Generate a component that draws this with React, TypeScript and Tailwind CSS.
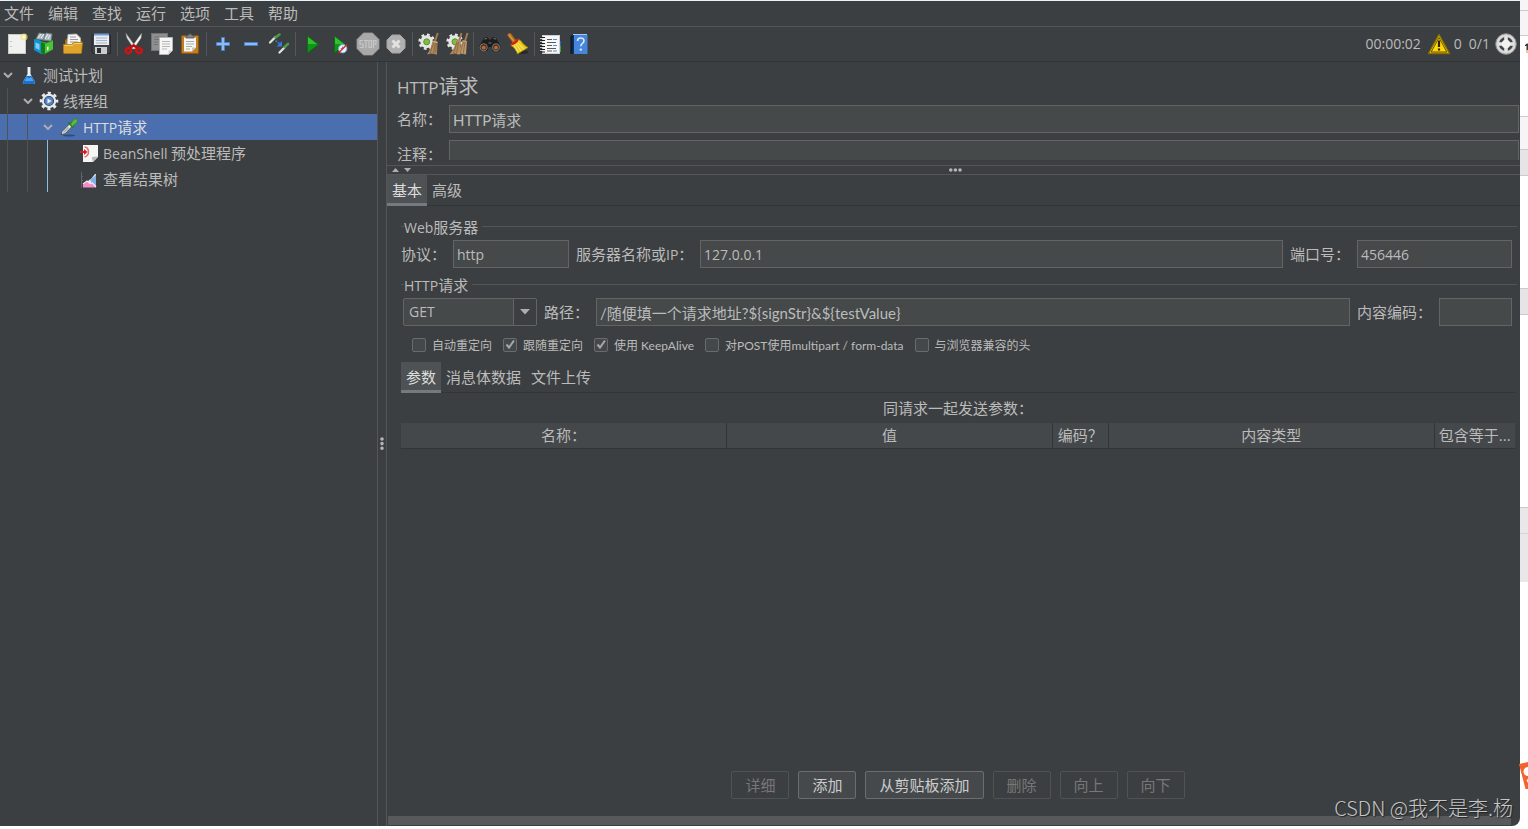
import { useState } from "react";
import type { ReactNode } from "react";
import clsx from "clsx";

const menus = ["文件", "编辑", "查找", "运行", "选项", "工具", "帮助"];

const inputClass = "h-7 min-w-0 border border-[#646464] bg-[#45494a] px-[3px] text-[#bbbbbb] outline-none";
const latinInput = clsx(inputClass, "text-sm");
// Lato keeps Latin runs in step with the 15px Chinese text
const mixedInput = clsx(inputClass, "font-['Lato','Noto_Sans_CJK_SC',sans-serif] text-[15px]");

/* ---------- icons ---------- */

function Icon({ children, size = 24 }: { children: ReactNode; size?: number }) {
  return (
    <svg width={size} height={size} viewBox={`0 0 ${size} ${size}`} fill="none" aria-hidden="true" className="shrink-0">
      {children}
    </svg>
  );
}

const NewIcon = () => (
  <Icon>
    <rect x="3.500" y="2.500" width="17" height="19" fill="#f1f1ef" stroke="#c9c9c6" />
    <path d="M5.500 9.500h1M5.500 14.500h1" stroke="#999" />
    <circle cx="19" cy="5" r="3.600" fill="#f3e27a" opacity=".7" />
    <circle cx="19" cy="5" r="1.800" fill="#fffbd0" />
  </Icon>
);

const TemplatesIcon = () => (
  <Icon>
    <path d="M3 7l3-6 6 1-1 6zM10 8l3-7 6 1-1 7z" fill="#a9b9c0" stroke="#6f7f86" strokeWidth=".8" />
    <path d="M5 6l3-4M8 6l3-4M12 7l3-5M15 7l2-4" stroke="#eef4f6" />
    <path d="M1 7l5 1 4 2v11.500l-2 .5-7-4z" fill="#1292d0" />
    <path d="M2.500 10.500l4 1.500v6l-4-2z" fill="#7fd0f0" />
    <path d="M8 9.500l6 1 6-2.500v9.500L11 22.500 8 21z" fill="#2da327" />
    <path d="M12 12l8-3v8l-8 4.500z" fill="#4cc535" />
    <path d="M8 10l4 2v10.500L8 21z" fill="#167a18" />
    <path d="M14 15l1.500-.5v3.500l-1.500.5z" fill="#eaffdf" />
  </Icon>
);

const OpenIcon = () => (
  <Icon>
    <path d="M4 8l3-2h12l2 4v11H4z" fill="#a8700f" />
    <path d="M7 2.500L15.500 2l4 4V14H6z" fill="#f4f4f4" stroke="#b7b7b7" strokeWidth=".8" />
    <path d="M9 5h6M9 7.500h8M9 10h8" stroke="#9a9a9a" />
    <path d="M2.500 12.500h8l2-2h9l-1 10c0 .6-.4 1-1 1H3.500c-.6 0-1-.4-1-1z" fill="#dfa42c" stroke="#b37a12" strokeWidth=".8" />
    <path d="M3.500 13.500h8l2-2h7" stroke="#f5cd6b" />
  </Icon>
);

const SaveIcon = () => (
  <Icon>
    <path d="M4 2.500h16.500l1 1v18H4.500l-1.500-2v-16z" fill="#3f4347" stroke="#24272a" />
    <rect x="5" y="2" width="15" height="11" fill="#e9edf3" />
    <path d="M5 2.500h15" stroke="#6f9bd4" strokeWidth="2" />
    <path d="M7 6h11M7 8.500h11M7 11h11" stroke="#a7b6c8" />
    <rect x="6" y="15" width="12" height="7" fill="#c9cbcd" />
    <rect x="8" y="16" width="4" height="5" fill="#2d3033" />
  </Icon>
);

const CutIcon = () => (
  <Icon>
    <path d="M4 1.500L14.500 16l-2.500 1L5 6z" fill="#e8e8e8" stroke="#a0a0a0" strokeWidth=".5" />
    <path d="M19.500 1.500L9 16l2.500 1L19 6z" fill="#fafafa" stroke="#a0a0a0" strokeWidth=".5" />
    <ellipse cx="6.500" cy="18.500" rx="2.800" ry="2.400" stroke="#d81010" strokeWidth="2.400" transform="rotate(-35 6.500 18.500)" />
    <ellipse cx="17" cy="18.500" rx="2.800" ry="2.400" stroke="#d81010" strokeWidth="2.400" transform="rotate(35 17 18.500)" />
    <path d="M8 16l3.700-2.800L15.500 16" stroke="#c00c0c" strokeWidth="2.400" />
  </Icon>
);

const CopyIcon = () => (
  <Icon>
    <rect x="1.500" y="1.500" width="16" height="17" fill="#8d8f90" stroke="#707273" />
    <path d="M4 5h11M4 7.500h5M4 10h4M4 12.500h4" stroke="#727475" />
    <path d="M9.500 5.500h13v13l-4 4h-9z" fill="#f6f6f6" stroke="#b4b4b4" />
    <path d="M12 9.500h8M12 12h8M12 14.500h8M12 17h5" stroke="#b6b6b6" />
    <path d="M18.500 22.500v-4h4z" fill="#cfcfcf" />
  </Icon>
);

const PasteIcon = () => (
  <Icon>
    <rect x="3.500" y="3.500" width="17" height="18" rx="1" fill="#c27d1f" stroke="#8d5610" />
    <path d="M6 5.500h12v10l-4 4H6z" fill="#f5f5f3" />
    <path d="M8 9.500h8M8 12h8M8 14.500h6M8 17h4" stroke="#a9a9a9" />
    <path d="M14 19.500v-4h4z" fill="#c4c4c4" />
    <path d="M8 6V3.500h2l1-1.500h2l1 1.500h2V6z" fill="#80837e" stroke="#4f514e" strokeWidth=".8" />
  </Icon>
);

const PlusIcon = () => (
  <Icon>
    <path d="M10.500 5.500h3v5h5v3h-5v5h-3v-5h-5v-3h5z" fill="#8fbcf0" stroke="#4a80c8" />
  </Icon>
);

const MinusIcon = () => (
  <Icon>
    <rect x="5.500" y="10.500" width="13" height="3" fill="#8fbcf0" stroke="#4a80c8" />
  </Icon>
);

const ToggleIcon = () => (
  <Icon>
    <path d="M3 10.500L8.500 5" stroke="#dfe8df" strokeWidth="2.200" strokeLinecap="round" />
    <path d="M8.500 5.500l4-3" stroke="#4c9a48" strokeWidth="2.600" strokeLinecap="round" />
    <path d="M12.500 20.500L18 15" stroke="#dfe8df" strokeWidth="2.200" strokeLinecap="round" />
    <path d="M17.500 15l3.500-3" stroke="#4c9a48" strokeWidth="2.600" strokeLinecap="round" />
    <path d="M8.500 8.500l5 4" stroke="#3c79d8" strokeWidth="1.500" strokeDasharray="2 1" />
    <path d="M15 9v5.500H9.500z" fill="#3c79d8" />
  </Icon>
);

const StartIcon = () => (
  <Icon>
    <path d="M7.500 4l11 8.500-11 8.500z" fill="#0c9714" stroke="#0a6b10" strokeWidth=".8" />
    <path d="M8 5l9 7H8z" fill="#35bd38" />
  </Icon>
);

const StartNoPauseIcon = () => (
  <Icon>
    <path d="M6.500 4l11 8.500-11 8.500z" fill="#0c9714" stroke="#0a6b10" strokeWidth=".8" />
    <path d="M7 5l9 7H7z" fill="#35bd38" />
    <circle cx="14.700" cy="16.700" r="4.200" fill="#e8f1fa" stroke="#7ba7d4" />
    <path d="M14.700 14.500v2.200h-2" stroke="#4777b0" />
    <path d="M10.500 21l8.500-8.500" stroke="#e02020" strokeWidth="1.300" />
  </Icon>
);

const StopIcon = () => (
  <Icon>
    <path d="M7.500 1h9L23 7.500v9L16.500 23h-9L1 16.500v-9z" fill="#a9a9a9" stroke="#9c9c9c" strokeWidth=".8" />
    <path d="M7 8.500H4v3.500h3v3.500H3.500M8 8.500h4M10 8.500v7.500M13 8.500h2.500v7H13zM17.500 16V8.500H20V12h-2.500" stroke="#c6c6c6" strokeWidth="1.200" />
  </Icon>
);

const ShutdownIcon = () => (
  <Icon>
    <path d="M8 3h8l5 5v8l-5 5H8l-5-5V8z" fill="#b0b0b0" stroke="#a4a4a4" />
    <path d="M8.500 8.500l7 7M15.500 8.500l-7 7" stroke="#e2e2e2" strokeWidth="3" />
  </Icon>
);

const ClearIcon = () => (
  <Icon>
    <circle cx="9.700" cy="9.700" r="7" stroke="#e6e6e4" strokeWidth="2.600" strokeDasharray="2.750 2.750" />
    <circle cx="9.700" cy="9.700" r="6.400" fill="#e6e6e4" />
    <circle cx="9.700" cy="9.800" r="3" fill="#7cc043" stroke="#5b8f34" />
    <path d="M20.800 1L18 9" stroke="#a07a4e" strokeWidth="2" />
    <path d="M15.500 8.500l5 1-.5 13-6-1-4 1c3-4.500 4.500-8.500 5.500-14z" fill="#b08a5e" />
    <path d="M17 10l-4 11M18.500 10l-2 11.500M19.500 11l-.8 10" stroke="#7c5b38" strokeWidth=".7" />
    <path d="M15.500 9.500l5 1" stroke="#d9b98d" />
  </Icon>
);

const ClearAllIcon = () => (
  <Icon>
    <circle cx="9.700" cy="9.700" r="7" stroke="#e6e6e4" strokeWidth="2.600" strokeDasharray="2.750 2.750" />
    <circle cx="9.700" cy="9.700" r="6.400" fill="#e6e6e4" />
    <circle cx="10" cy="9.800" r="3" fill="#7cc043" stroke="#5b8f34" />
    <path d="M16.500 1L14 9M22.500 1L20 9" stroke="#a07a4e" strokeWidth="2" />
    <path d="M11.500 8l4.500 1-1 13.500-5.500-1-5 1c4-5 6-9 7-14.500z" fill="#b08a5e" />
    <path d="M17.500 8l4.500 1-1 13.500-5.500-1-3.500 1c3-5 4.500-9 5.500-14.500z" fill="#bd986b" />
    <path d="M12 10L8.500 21M13.500 10l-2 11.500M18.500 10L15 21M20 10l-1.800 11.500" stroke="#7c5b38" strokeWidth=".7" />
  </Icon>
);

const SearchIcon = () => (
  <Icon>
    <path d="M6 6l3-1 3 3 3-3 3 1 4.500 8-1 5h-7l-1-4h-3l-1 4h-7l-1-5z" fill="#1d1d1d" />
    <path d="M6.500 7l2.500-.5M15.500 6.500l2.500.5M10.500 11h3" stroke="#777" />
    <circle cx="5.700" cy="15.300" r="3.600" fill="#4b3225" stroke="#777" />
    <circle cx="18" cy="15.300" r="3.600" fill="#4b3225" stroke="#777" />
    <circle cx="5.700" cy="15.600" r="1.900" fill="#c2672d" />
    <circle cx="18" cy="15.600" r="1.900" fill="#c2672d" />
  </Icon>
);

const BroomIcon = () => (
  <Icon>
    <ellipse cx="16" cy="20" rx="6.500" ry="2" fill="#27292a" />
    <path d="M3.500 3l4.500 6" stroke="#b86a1c" strokeWidth="4" strokeLinecap="round" />
    <path d="M3 2.500L7.500 9" stroke="#e2a14d" strokeWidth="1.200" />
    <path d="M5 12l7-5 3 2c2 3 4 5 7 6.500L11.500 22C10 18 8 15 5 13.500z" fill="#eccb1d" stroke="#a8860a" strokeWidth=".8" />
    <path d="M10 12l5 7M12 11l6 6.500M8 13.500l4 6.500" stroke="#fff08a" />
    <path d="M4.500 12.500c3-.5 6-2.500 7.500-5.500" stroke="#cc1f14" strokeWidth="2.200" />
  </Icon>
);

const FunctionIcon = () => (
  <Icon>
    <path d="M20 9h2v5h-2z" fill="#2b63c4" />
    <path d="M20 14h2v6h-2z" fill="#3ca52e" />
    <rect x="3.500" y="3.500" width="17" height="18" fill="#f7f7f7" stroke="#cfcfcf" />
    <path d="M8 7.500h5M8 10.500h9M8 13.500h5M8 16.500h9M8 19h5" stroke="#5a5a5a" />
    <path d="M14 7.500h4M14 13.500h4M14 19h4" stroke="#4a90e0" />
    <path d="M1 5.500h5M1 8.500h5M1 11.500h5M1 14.500h5M1 17.500h5M1 20h5" stroke="#1f1f1f" strokeWidth="1.200" />
    <path d="M1 6.500h4M1 9.500h4M1 12.500h4M1 15.500h4M1 18.500h4" stroke="#e8e8e8" strokeWidth=".8" />
  </Icon>
);

const HelpIcon = () => (
  <Icon>
    <path d="M3.500 3.500l2-1.500h14v1L7 22H3.500z" fill="#16304f" />
    <rect x="7" y="3" width="13.500" height="19" fill="#4685dc" />
    <path d="M4.500 4v17.500" stroke="#0c1c30" strokeWidth="2" />
    <path d="M6 2.500h14" stroke="#a9c8ef" />
    <path d="M10.500 9c0-4 6.500-4 6.500-.3 0 2.800-3.200 2.800-3.200 5.500" stroke="#dce9fb" strokeWidth="1.600" />
    <circle cx="13.800" cy="17.600" r="1.200" fill="#dce9fb" />
  </Icon>
);

const WarningIcon = () => (
  <Icon>
    <path d="M12 2.500L22.500 21.500h-21z" fill="#ffd60a" stroke="#8a6f00" strokeWidth="1.400" strokeLinejoin="round" />
    <path d="M12 5.500L19.800 20H4.200z" fill="#ffd60a" stroke="#3a3000" strokeWidth=".8" />
    <path d="M12 8.500V15M12 16.500v2" stroke="#2d2500" strokeWidth="2.200" />
  </Icon>
);

const RemoteIcon = () => (
  <Icon>
    <circle cx="12" cy="12" r="10.300" fill="#d8d8d8" stroke="#8d8d8d" />
    <circle cx="12" cy="12" r="5.700" stroke="#444" strokeWidth="2.800" />
    <path d="M12 4.500v15M4.500 12h15" stroke="#e6e6e6" strokeWidth="3.600" />
    <circle cx="12" cy="12" r="4.200" fill="#f2f2f2" />
  </Icon>
);

const FlaskIcon = () => (
  <Icon size={22}>
    <path d="M9.500 3h3v7l4.500 8c.4.800 0 2-1 2H6c-1 0-1.400-1.200-1-2l4.500-8z" fill="#dfe8f0" />
    <path d="M8.500 12h5L17 18c.4.800 0 2-1 2H6c-1 0-1.400-1.200-1-2z" fill="#1c72c8" />
    <path d="M9 13l2 1.500L13 13l2.500 4H6.500z" fill="#4ba5f5" />
    <path d="M11 4v7" stroke="#fff" />
  </Icon>
);

const GearIcon = () => (
  <Icon size={22}>
    <circle cx="11" cy="11" r="8" stroke="#e9e9e9" strokeWidth="2.600" strokeDasharray="3.142 3.142" strokeDashoffset="1.571" />
    <circle cx="11" cy="11" r="7.200" fill="#e9e9e9" />
    <circle cx="11" cy="11" r="4.500" fill="#5b87c4" stroke="#2e4f80" strokeWidth="1.200" />
    <path d="M9.500 8.500l4 2.500-4 2.500z" fill="#eef4fb" />
  </Icon>
);

const PipetteIcon = () => (
  <Icon size={22}>
    <ellipse cx="11" cy="19.500" rx="6" ry="1" fill="#2f4a7d" />
    <path d="M3 18.500l1-3L12 7.500l2.500 2.500L7 17.800z" fill="#e4ebe6" stroke="#42474a" strokeWidth=".9" />
    <path d="M5.500 16.500l5-5" stroke="#9aa3a0" strokeWidth="1.200" />
    <path d="M10.500 6.500l5 5" stroke="#2d7a27" strokeWidth="2.200" />
    <path d="M12.500 8.500l2-3.500c1-1.500 2.700-2.500 4.200-2l.8 1c.3 1.700-.8 3.200-2.400 4.200L14.500 10.500z" fill="#5bb83f" stroke="#2f7e24" strokeWidth=".8" />
  </Icon>
);

const PreProcessorIcon = () => (
  <Icon size={22}>
    <path d="M5 3h15v12l-5 5H5z" fill="#f6f6f4" />
    <path d="M20 14.500L14.500 20l-.5-5z" fill="#b9b9b7" />
    <path d="M6.500 5c5 .5 5.500 8.500 0 10" stroke="#e07070" strokeWidth="1.600" />
    <path d="M2 10h6" stroke="#d62020" strokeWidth="2" />
    <path d="M6 7l3.500 3L6 13z" fill="#d62020" />
  </Icon>
);

const ResultTreeIcon = () => (
  <Icon size={22}>
    <path d="M3.500 4v15.500M3.500 8.500H5M3.500 12.500H5" stroke="#62666a" />
    <path d="M8 16l3-4 2-1 4-5h1v13H8z" fill="#d3e5f7" />
    <path d="M12.500 12L18 7v12h-3z" fill="#7fb0e6" />
    <path d="M5 19.500v-3l4-3.500 3 2.500 2.500-.5 3.500 4.500z" fill="#ef8ec8" />
    <path d="M5 16l4-3 3 2.500 2.500-.5L18 19" stroke="#fbe1f1" strokeWidth="1.200" />
  </Icon>
);

const ChevronDown = () => (
  <svg width="10" height="6" viewBox="0 0 10 6" fill="none" aria-hidden="true">
    <path d="M1 1l4 4 4-4" stroke="#adadad" strokeWidth="2" />
  </svg>
);

/* ---------- toolbar ---------- */

const toolGroups: { label: string; icon: () => ReactNode }[][] = [
  [
    { label: "新建", icon: NewIcon },
    { label: "模板", icon: TemplatesIcon },
    { label: "打开", icon: OpenIcon },
    { label: "保存", icon: SaveIcon },
  ],
  [
    { label: "剪切", icon: CutIcon },
    { label: "复制", icon: CopyIcon },
    { label: "粘贴", icon: PasteIcon },
  ],
  [
    { label: "展开", icon: PlusIcon },
    { label: "折叠", icon: MinusIcon },
    { label: "切换", icon: ToggleIcon },
  ],
  [
    { label: "启动", icon: StartIcon },
    { label: "不停顿启动", icon: StartNoPauseIcon },
    { label: "停止", icon: StopIcon },
    { label: "关闭", icon: ShutdownIcon },
  ],
  [
    { label: "清除", icon: ClearIcon },
    { label: "清除全部", icon: ClearAllIcon },
  ],
  [
    { label: "搜索", icon: SearchIcon },
    { label: "重置搜索", icon: BroomIcon },
  ],
  [
    { label: "函数助手", icon: FunctionIcon },
    { label: "帮助", icon: HelpIcon },
  ],
];

function Toolbar() {
  return (
    <div className="flex h-[35px] shrink-0 items-center border-b border-[#323436] pl-[3px] pr-0.5">
      {toolGroups.map((group, index) => (
        <div key={index} className="flex items-center">
          {index > 0 && <div className="mx-0.5 h-6 w-px bg-[#555759]" />}
          {group.map(({ label, icon: ToolIcon }) => (
            <button key={label} type="button" aria-label={label} className="flex h-7 w-7 items-center justify-center">
              <ToolIcon />
            </button>
          ))}
        </div>
      ))}
      <div className="ml-auto flex items-center text-sm leading-6">
        <span>00:00:02</span>
        <button type="button" aria-label="日志" className="ml-1.5 mr-[3px]">
          <WarningIcon />
        </button>
        <span>0</span>
        <span className="ml-[7px] mr-1">0/1</span>
        <RemoteIcon />
      </div>
    </div>
  );
}

/* ---------- tree ---------- */

type TreeNode = { id: string; depth: number; icon: () => ReactNode; label: ReactNode; leaf?: boolean };

const tree: TreeNode[] = [
  { id: "plan", depth: 0, icon: FlaskIcon, label: "测试计划" },
  { id: "group", depth: 1, icon: GearIcon, label: "线程组" },
  { id: "http", depth: 2, icon: PipetteIcon, label: <><En>HTTP</En>请求</> },
  { id: "bean", depth: 3, icon: PreProcessorIcon, label: <><En>BeanShell </En>预处理程序</>, leaf: true },
  { id: "results", depth: 3, icon: ResultTreeIcon, label: "查看结果树", leaf: true },
];

function En({ children }: { children: ReactNode }) {
  return <span className="whitespace-pre text-sm">{children}</span>;
}

function TestTree() {
  const [selected, setSelected] = useState("http");

  return (
    <nav className="w-[378px] shrink-0 border-r border-[#555555]">
      <ul>
        {tree.map(({ id, depth, icon: NodeIcon, label, leaf }) => (
          <li key={id}>
            <button
              type="button"
              onClick={() => setSelected(id)}
              className={clsx("flex h-[26px] w-full items-center", selected === id && "bg-[#4b6eaf] text-[#dddddd]")}
            >
              {Array.from({ length: depth }, (_, level) => (
                <span key={level} className="flex h-full w-5 pl-[7px]">
                  <span className={clsx("h-full w-px", level === 2 ? "bg-[#83c1ea]" : "bg-[#505355]")} />
                </span>
              ))}
              <span className="flex w-[18px] pl-[3px]">{!leaf && <ChevronDown />}</span>
              <NodeIcon />
              <span className="pl-[3px] leading-5">{label}</span>
            </button>
          </li>
        ))}
      </ul>
    </nav>
  );
}

/* ---------- form parts ---------- */

function Tabs({ items }: { items: string[] }) {
  const [active, setActive] = useState(items[0]);

  return (
    <div role="tablist" className="flex h-[31px] shrink-0 border-b border-[#323436]">
      {items.map((item) => (
        <button
          key={item}
          type="button"
          role="tab"
          aria-selected={item === active}
          onClick={() => setActive(item)}
          className={clsx(
            "h-[31px] border-b-3 px-[5px] pt-0.5",
            item === active ? "border-[#747a80] bg-[#4e5254] text-[#dddddd]" : "border-transparent"
          )}
        >
          {item}
        </button>
      ))}
    </div>
  );
}

function GroupTitle({ children }: { children: ReactNode }) {
  return (
    <div className="flex h-[26px] items-center">
      <span className="mb-0.5 h-px w-[3px] bg-[#555555]" />
      <h2 className="pr-1">{children}</h2>
      <span className="mb-0.5 h-px flex-1 bg-[#555555]" />
    </div>
  );
}

function Check({ label, defaultChecked }: { label: string; defaultChecked?: boolean }) {
  return (
    <label className="flex items-center gap-1.5 font-['Lato','Noto_Sans_CJK_SC',sans-serif] text-xs">
      <span className="relative h-4">
        <input
          type="checkbox"
          defaultChecked={defaultChecked}
          className="peer block h-3.5 w-3.5 appearance-none rounded-xs border border-[#6b6b6b] bg-[#43494a]"
        />
        <svg viewBox="0 0 14 14" fill="none" className="pointer-events-none invisible absolute left-0 top-0 h-3.5 w-3.5 peer-checked:visible">
          <path d="M3.500 6.500L6 9.500l5-7" stroke="#a7a7a7" strokeWidth="2" />
        </svg>
      </span>
      {label}
    </label>
  );
}

function ParamsTable() {
  return (
    <table className="w-full table-fixed border-b border-[#323436]">
      <colgroup>
        <col />
        <col />
        <col className="w-14" />
        <col />
        <col className="w-[81px]" />
      </colgroup>
      <thead>
        <tr className="h-[25px] bg-[#45484a]">
          {["名称：", "值", "编码？", "内容类型", "包含等于..."].map((name) => (
            <th key={name} className="whitespace-nowrap border-r border-[#323436] font-normal leading-6 last:border-r-0">
              {name}
            </th>
          ))}
        </tr>
      </thead>
    </table>
  );
}

const actions = [
  { label: "详细", disabled: true },
  { label: "添加", disabled: false },
  { label: "从剪贴板添加", disabled: false },
  { label: "删除", disabled: true },
  { label: "向上", disabled: true },
  { label: "向下", disabled: true },
];

function RequestPanel() {
  return (
    <main className="flex min-w-0 flex-1 flex-col border-l border-[#555555]">
      <div className="h-[103px] shrink-0 pl-[10px] pr-px pt-[9px]">
        <h1 className="h-[34px] text-xl leading-8">
          <span className="text-[17px]">HTTP</span>请求
        </h1>
        <div className="flex items-center">
          <label htmlFor="name" className="w-[52px]">名称：</label>
          <input id="name" defaultValue="HTTP请求" className={clsx(mixedInput, "flex-1")} />
        </div>
        {/* the split pane covers the lower part of this field */}
        <div className="mt-[7px] flex items-start">
          <label htmlFor="comment" className="w-[52px] leading-7">注释：</label>
          <div className="flex h-5 flex-1 overflow-hidden">
            <input id="comment" className={clsx(mixedInput, "flex-1")} />
          </div>
        </div>
      </div>

      <div className="flex h-[10px] shrink-0 items-center border-y border-[#555555] pl-[5px] pr-5">
        <svg width="20" height="6" viewBox="0 0 20 6" aria-hidden="true">
          <path d="M0 5l3.500-4L7 5zM12 1h7l-3.500 4z" fill="#adadad" />
        </svg>
        <svg width="14" height="4" viewBox="0 0 14 4" className="mx-auto" aria-hidden="true">
          <path d="M0 2a1.800 1.800 0 1 0 3.600 0a1.800 1.800 0 1 0-3.600 0M4.600 2a1.800 1.800 0 1 0 3.600 0a1.800 1.800 0 1 0-3.600 0M9.200 2a1.800 1.800 0 1 0 3.600 0a1.800 1.800 0 1 0-3.600 0" fill="#b5b5b5" />
        </svg>
      </div>

      <Tabs items={["基本", "高级"]} />

      <div className="pl-[14px] pr-[3px] pt-2">
        <GroupTitle><En>Web</En>服务器</GroupTitle>
        <div className="flex items-center pr-[5px]">
          <label htmlFor="protocol" className="w-[52px]">协议：</label>
          <input id="protocol" defaultValue="http" className={clsx(latinInput, "w-29")} />
          <label htmlFor="server" className="ml-[7px] w-[124px] shrink-0">服务器名称或<En>IP</En>：</label>
          <input id="server" defaultValue="127.0.0.1" className={clsx(latinInput, "flex-1")} />
          <label htmlFor="port" className="ml-[7px] w-[67px] shrink-0">端口号：</label>
          <input id="port" defaultValue="456446" className={clsx(latinInput, "w-[155px]")} />
        </div>
        <div className="h-1" />
        <GroupTitle><En>HTTP</En>请求</GroupTitle>
        <div className="flex items-center pl-0.5 pr-[5px]">
          <div className="relative">
            <select
              aria-label="方法"
              className="block h-7 w-[134px] appearance-none rounded-xs border border-[#646464] bg-[#45494a] pl-[5px] text-sm text-[#bbbbbb] outline-none"
            >
              <option>GET</option>
              <option>POST</option>
            </select>
            <span className="pointer-events-none absolute inset-y-px right-px flex w-[23px] items-center justify-center border-l border-[#646464] bg-[#3c3f41]">
              <svg width="10" height="6" viewBox="0 0 10 6" aria-hidden="true">
                <path d="M0 0h10L5 5.500z" fill="#adadad" />
              </svg>
            </span>
          </div>
          <label htmlFor="path" className="ml-[7px] w-[52px] shrink-0">路径：</label>
          <input id="path" defaultValue="/随便填一个请求地址?${signStr}&${testValue}" className={clsx(mixedInput, "flex-1")} />
          <label htmlFor="encoding" className="ml-[7px] w-[82px] shrink-0">内容编码：</label>
          <input id="encoding" className={clsx(latinInput, "w-[73px]")} />
        </div>
        <div className="flex h-[36px] items-center gap-[11px] pl-[11px] pt-1">
          <Check label="自动重定向" />
          <Check label="跟随重定向" defaultChecked />
          <Check label="使用 KeepAlive" defaultChecked />
          <Check label="对POST使用multipart / form-data" />
          <Check label="与浏览器兼容的头" />
        </div>
      </div>

      <div className="flex flex-1 flex-col pl-[14px] pr-[5px]">
        <Tabs items={["参数", "消息体数据", "文件上传"]} />
        <p className="py-[3px] text-center leading-6">同请求一起发送参数：</p>
        <ParamsTable />
        <div className="mt-auto flex justify-center gap-[9px] pb-[17px]">
          {actions.map(({ label, disabled }) => (
            <button
              key={label}
              type="button"
              disabled={disabled}
              className={clsx(
                "h-7 rounded-xs border px-[13px]",
                disabled ? "border-[#505254] text-[#777777]" : "border-[#6b6d6f] bg-[#45494c] text-[#cccccc]"
              )}
            >
              {label}
            </button>
          ))}
        </div>
      </div>
      <div className="mb-px ml-px mr-[9px] h-[9px] shrink-0 bg-[#58595a]" />
    </main>
  );
}

/* Sliver of the window that sits behind, visible at the right edge */
function BackWindow() {
  return (
    <div aria-hidden="true" className="relative flex w-2 shrink-0 flex-col bg-white">
      <div className="h-[11px] border-b border-[#c9cbd0] bg-[#f5f5f7]" />
      <div className="h-[25px] border-b border-[#c9cbd0] bg-[#f5f5f7]" />
      <div className="h-[81px] border-b border-[#c9cbd0]" />
      <div className="h-[33px] border-b border-[#c9cbd0] bg-[#f5f5f7]" />
      <div className="h-[26px] border-b border-[#c9cbd0] bg-[#e5e5e7]" />
      <div className="h-[113px] border-b border-[#c9cbd0]" />
      <div className="h-[26px] border-b border-[#c9cbd0] bg-[#e5e5e7]" />
      <div className="h-[193px] border-b border-[#c9cbd0]" />
      <div className="h-[26px] border-b border-[#d5d5d8] bg-[#e8e8ea]" />
      <div className="h-[48px] bg-[#e8e8ea]" />
      <svg width="8" height="12" viewBox="0 0 8 12" className="absolute left-0 top-[42px]">
        <path d="M5 3l2-1.500h1V8H6.500V4H5z" fill="#3a3a3a" />
        <path d="M6 8h2v3H6z" fill="#f6c48a" />
      </svg>
      <svg width="9" height="30" viewBox="0 0 9 30" className="absolute right-0 top-[761px]">
        <path d="M0 3l9-2v27H6.500z" fill="#f4622e" />
        <path d="M9 6a4.500 4.500 0 0 0 0 9zM9 18l-1.500 1L9 22z" fill="#fff" />
      </svg>
    </div>
  );
}

export default function App() {
  return (
    <div className="flex h-screen w-full overflow-hidden bg-white font-['Open_Sans','Noto_Sans_CJK_SC',sans-serif] text-[15px] leading-5 text-[#bbbbbb]">
      <div className="relative mb-[3px] flex min-w-0 flex-1 flex-col overflow-hidden rounded-br-lg border-t border-[#e8f4fa] bg-[#3c3f41]">
        <nav className="flex h-[26px] shrink-0 items-center gap-[14px] border-b border-[#555555] pb-0.5 pl-1">
          {menus.map((menu) => (
            <button key={menu} type="button">{menu}</button>
          ))}
        </nav>
        <Toolbar />
        <div className="flex min-h-0 flex-1">
          <TestTree />
          <div className="flex w-2 shrink-0 items-center justify-center">
            <svg width="4" height="14" viewBox="0 0 4 14" aria-hidden="true">
              <path d="M.2 2a1.800 1.800 0 1 0 3.600 0a1.800 1.800 0 1 0-3.600 0M.2 6.600a1.800 1.800 0 1 0 3.600 0a1.800 1.800 0 1 0-3.600 0M.2 11.200a1.800 1.800 0 1 0 3.600 0a1.800 1.800 0 1 0-3.600 0" fill="#b5b5b5" />
            </svg>
          </div>
          <RequestPanel />
        </div>
        <p className="absolute bottom-1 right-[7px] font-['Noto_Sans_CJK_SC',sans-serif] text-xl font-light leading-7 text-[#c4c5c6] text-shadow-[1px_1px_1px_#222222]">
          CSDN @我不是李.杨
        </p>
      </div>
      <BackWindow />
    </div>
  );
}
